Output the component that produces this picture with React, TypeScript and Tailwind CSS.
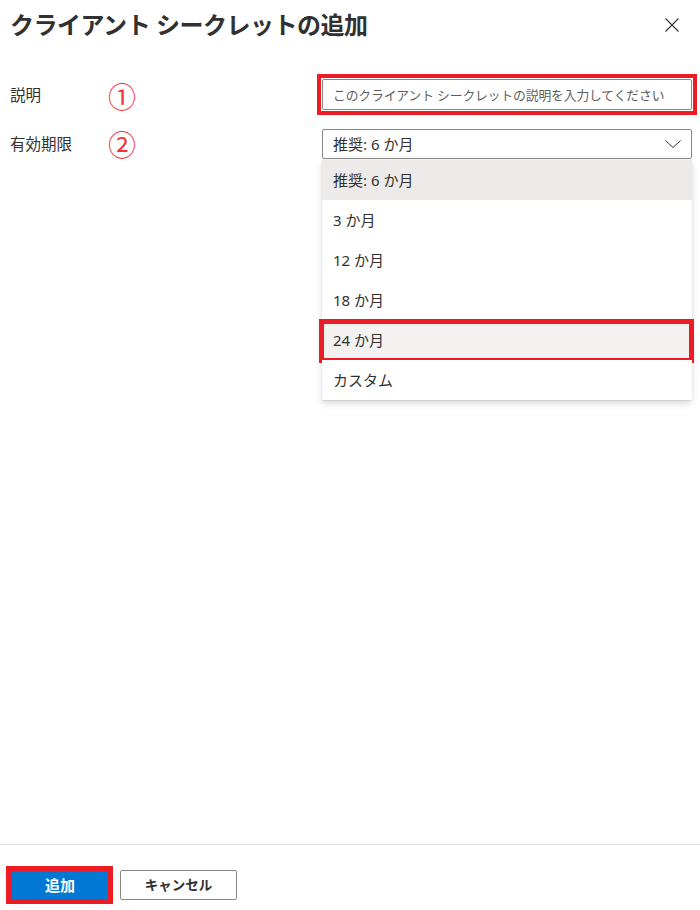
import React from "react";

const options = ["推奨: 6 か月", "3 か月", "12 か月", "18 か月", "24 か月", "カスタム"];

function CloseIcon() {
  return (
    <svg width="14" height="14" viewBox="0 0 14 14" fill="none">
      <path d="M0.5 0.5L13.5 13.5M13.5 0.5L0.5 13.5" stroke="#323130" strokeWidth="1.1" />
    </svg>
  );
}

function Chevron() {
  return (
    <svg width="16" height="8" viewBox="0 0 16 8" fill="none">
      <path d="M0.5 0.5L8 7.5L15.5 0.5" stroke="#323130" strokeWidth="1" />
    </svg>
  );
}

export default function App() {
  return (
    <div className="w-[700px] h-[910px] bg-white flex flex-col text-[#323130] font-['Noto_Sans','Noto_Sans_CJK_JP',sans-serif]">
      {/* Header */}
      <div className="h-[46px] pt-[3px] pl-[10px] pr-[21px] flex items-center justify-between">
        <h1 className="text-[24px] leading-[38px] font-semibold tracking-[-0.02em] text-[#323130]">
          クライアント シークレットの追加
        </h1>
        <button className="w-[14px] h-[14px] flex items-center justify-center">
          <CloseIcon />
        </button>
      </div>

      {/* Form */}
      <div className="pt-[33px] pl-[10px] flex flex-col gap-[19px]">
        <div className="flex items-center h-[31px]">
          <div className="w-[98px] text-[15.5px] leading-[20px] pt-[1px]">説明</div>
          <div className="w-[214px] text-[28px] leading-none text-[#f5333a] font-['Noto_Sans_CJK_JP',sans-serif] pt-[2px]">
            ①
          </div>
          <div className="w-[370px] h-[31px] outline-4 outline-solid outline-offset-1 outline-[#ed1c24]">
            <input
              className="w-full h-full border border-[#8a8886] rounded-[2px] px-[10px] text-[12.8px] text-[#323130] placeholder:text-[#605e5c] tracking-[-0.01em] outline-none"
              placeholder="このクライアント シークレットの説明を入力してください"
            />
          </div>
        </div>

        <div className="flex items-start">
          <div className="w-[98px] h-[30px] flex items-center text-[15.5px] leading-[20px]">有効期限</div>
          <div className="w-[214px] h-[30px] flex items-center text-[28px] leading-none text-[#f5333a] font-['Noto_Sans_CJK_JP',sans-serif]">
            ②
          </div>
          <div className="relative w-[370px]">
            <div className="h-[30px] border border-[#8a8886] rounded-[2px] pl-[10px] pr-[10px] flex items-center justify-between text-[15px]">
              <span>推奨: 6 か月</span>
              <Chevron />
            </div>
            <ul className="absolute left-0 right-0 top-[31px] bg-white rounded-[2px] shadow-[0_3.2px_7.2px_rgba(0,0,0,0.13),0_0.6px_1.8px_rgba(0,0,0,0.11)]">
              {options.map((o, i) => (
                <li
                  key={o}
                  className={`relative h-[40px] pl-[11px] flex items-center text-[15px] ${
                    i === 0 ? "bg-[#edebe9]" : i === 4 ? "bg-[#f3f2f1]" : "bg-white"
                  } ${i === 5 ? "h-[38px]" : ""}`}
                >
                  {o}
                  {i === 4 && (
                    <span className="absolute -left-[3px] -right-[2px] -top-[1px] -bottom-[3px] border-[5px] border-[#ed1c24]" />
                  )}
                </li>
              ))}
            </ul>
          </div>
        </div>
      </div>

      <div className="flex-1" />

      {/* Footer */}
      <div className="border-t border-[#e1dfdd] pt-[25px] pb-[10px] pl-[10px] flex gap-[10px]">
        <button className="relative w-[100px] h-[30px] bg-[#0078d4] rounded-[2px] text-white text-[15px] font-bold">
          追加
          <span className="absolute -left-[4px] -right-[3px] -top-[4px] -bottom-[4px] border-[5px] border-[#ed1c24]" />
        </button>
        <button className="w-[117px] h-[30px] bg-white border border-[#8a8886] rounded-[2px] text-[#323130] text-[13.5px] font-semibold">
          キャンセル
        </button>
      </div>
    </div>
  );
}
